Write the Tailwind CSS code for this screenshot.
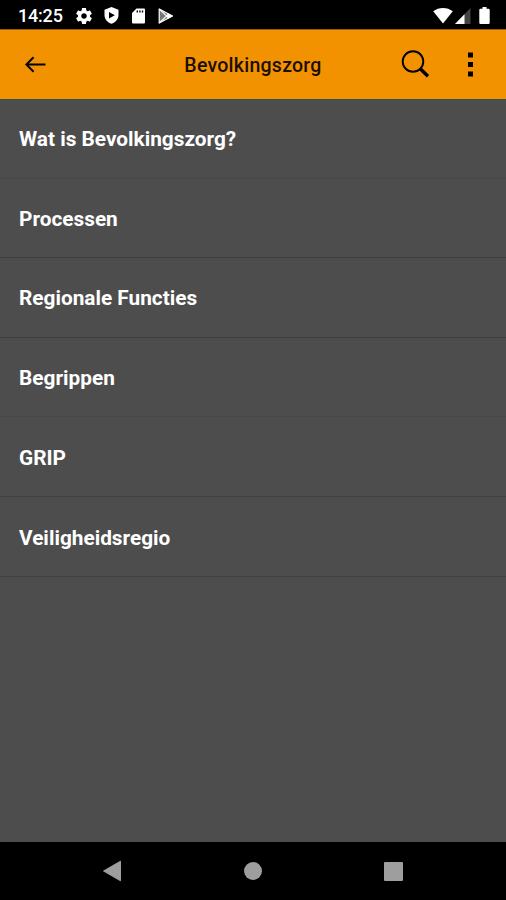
<!DOCTYPE html>
<html lang="nl">
<head>
  <meta charset="UTF-8" />
  <meta name="viewport" content="width=device-width, initial-scale=1.0" />
  <title>Bevolkingszorg</title>
  <script src="https://cdn.jsdelivr.net/npm/@tailwindcss/browser@4"></script>
</head>
<body class="bg-[#4d4d4d] font-['Roboto',sans-serif]">
<div class="flex flex-col h-screen overflow-hidden">

  <!-- status bar -->
  <div class="h-[29px] shrink-0 bg-black flex items-center justify-between pl-[18px] pr-4 pt-[2px] text-white">
    <div class="flex items-center">
      <span class="w-[58px] text-[18px] leading-[20px] font-medium tracking-[-0.2px]">14:25</span>
      <!-- gear -->
      <svg class="w-[16px] h-[16px]" viewBox="2 2 20 20" fill="currentColor"><path d="M19.43 12.98c.04-.32.07-.64.07-.98s-.03-.66-.07-.98l2.11-1.65c.19-.15.24-.42.12-.64l-2-3.46c-.12-.22-.39-.3-.61-.22l-2.49 1c-.52-.4-1.08-.73-1.69-.98l-.38-2.65C14.46 2.18 14.25 2 14 2h-4c-.25 0-.46.18-.49.42l-.38 2.65c-.61.25-1.17.59-1.69.98l-2.49-1c-.23-.09-.49 0-.61.22l-2 3.46c-.13.22-.07.49.12.64l2.11 1.65c-.04.32-.07.65-.07.98s.03.66.07.98l-2.11 1.65c-.19.15-.24.42-.12.64l2 3.46c.12.22.39.3.61.22l2.49-1c.52.4 1.08.73 1.69.98l.38 2.65c.03.24.24.42.49.42h4c.25 0 .46-.18.49-.42l.38-2.65c.61-.25 1.17-.59 1.69-.98l2.49 1c.23.09.49 0 .61-.22l2-3.46c.12-.22.07-.49-.12-.64l-2.11-1.65zM12 15.5c-1.93 0-3.5-1.57-3.5-3.5s1.57-3.5 3.5-3.5 3.5 1.57 3.5 3.5-1.57 3.5-3.5 3.5z"/></svg>
      <!-- shield with play -->
      <svg class="w-[15px] h-[17px] ml-[12px]" viewBox="0 0 15 17" fill="currentColor" fill-rule="evenodd"><path d="M7.5 0 14.5 2.7V8c0 4.2-3 7.6-7 8.8C3.5 15.6.5 12.2.5 8V2.7zM5 5v6.6L10.8 8.3z"/></svg>
      <!-- sd card -->
      <svg class="w-[13px] h-[16px] ml-[13px]" viewBox="0 0 13 16" fill="currentColor" fill-rule="evenodd"><path d="M4.5.5H12Q13 .5 13 1.5V14.5Q13 15.5 12 15.5H1Q0 15.5 0 14.5V5zM4.6 2.5V4.5H6V2.5zM7.2 2.5V4.5H8.6V2.5zM9.8 2.5V4.5H11.2V2.5z"/></svg>
      <!-- play store -->
      <svg class="w-[16px] h-[16px] ml-[13px]" viewBox="0 0 16 16"><path d="M1.2 1 14.5 8 1.2 15z" fill="#777" stroke="#fff" stroke-width="1.2" stroke-linejoin="round"/><path d="M1.2 1 10.8 10.2M1.2 15 10.8 5.8" stroke="#fff" stroke-width="1.1"/><path d="M10.5 5.5 15 8 10.5 10.5 8 8z" fill="#fff"/></svg>
    </div>
    <div class="flex items-center">
      <svg class="w-[20px] h-[16px]" viewBox="0 0 20 16" fill="currentColor"><path d="M10 15.5.2 3.3C3 1.2 6.3 0 10 0s7 1.2 9.8 3.3z"/></svg>
      <svg class="w-[16px] h-[16px] ml-[2px]" viewBox="0 0 16 16"><path d="M15.5 0V16H0z" fill="#444"/><path d="M9.5 6.2V16H0z" fill="#fff"/></svg>
      <svg class="w-[11px] h-[17px] ml-[8px]" viewBox="0 0 11 17" fill="currentColor"><path d="M3.5 0h4v1.8H9.5Q10.7 1.8 10.7 3V15.8Q10.7 17 9.5 17H1.5Q.3 17 .3 15.8V3Q.3 1.8 1.5 1.8H3.5z"/></svg>
    </div>
  </div>

  <!-- app bar -->
  <header class="h-[71px] shrink-0 bg-[#f39200] border-t border-t-[#9b5d00] border-b border-b-[#34504a] grid grid-cols-[1fr_auto_1fr] items-center text-[#1a0f00]">
    <svg class="w-[22px] h-[17px] ml-[25px] text-black" viewBox="0 0 22 17" fill="none" stroke="currentColor" stroke-width="2"><path d="M20.5 8.5H1.5M8.6 1.2 1.3 8.5 8.6 15.8"/></svg>
    <h1 class="text-[19.5px] leading-6 font-medium tracking-[0.25px] pt-[2px]">Bevolkingszorg</h1>
    <div class="flex items-center justify-end pr-[33px] text-black">
      <svg class="w-[29px] h-[29px]" viewBox="0 0 29 29" fill="none" stroke="currentColor"><circle cx="12" cy="11.5" r="10.3" stroke-width="1.9"/><path d="M19 18.5 27 26.3" stroke-width="3.4"/></svg>
      <svg class="w-[5px] h-[25px] ml-[38px]" viewBox="0 0 5 25" fill="currentColor"><path d="M0 .5h5v5H0zM0 10h5v5H0zM0 19.5h5v5H0z"/></svg>
    </div>
  </header>

  <!-- menu -->
  <ul class="flex-1 text-white text-[20.8px] font-bold">
    <li class="h-[78.6px] pl-[19px] pt-px flex items-center border-b border-[#484848]">Wat is Bevolkingszorg?</li>
    <li class="h-[79.6px] pl-[19px] pt-[4px] flex items-center border-b border-[#404040]">Processen</li>
    <li class="h-[79.6px] pl-[19px] pt-[3px] flex items-center border-b border-[#404040]">Regionale Functies</li>
    <li class="h-[79.6px] pl-[19px] pt-[4px] flex items-center border-b border-[#484848]">Begrippen</li>
    <li class="h-[79.6px] pl-[19px] pt-[3px] flex items-center border-b border-[#404040]">GRIP</li>
    <li class="h-[79.6px] pl-[19px] pt-[4px] flex items-center border-b border-[#404040]">Veiligheidsregio</li>
  </ul>

  <!-- navigation bar -->
  <nav class="h-[58px] shrink-0 bg-black flex items-center justify-between pl-[102px] pr-[103px] text-[#9e9e9e]">
    <svg class="w-[20px] h-[22px]" viewBox="0 0 20 22" fill="currentColor"><path d="M1.5 11 18.5 1.2V20.8z" stroke="currentColor" stroke-linejoin="round"/></svg>
    <span class="w-[18px] h-[18px] rounded-full bg-[#9e9e9e]"></span>
    <span class="w-[19px] h-[19px] rounded-[1px] bg-[#9e9e9e]"></span>
  </nav>
</div>
</body>
</html>
